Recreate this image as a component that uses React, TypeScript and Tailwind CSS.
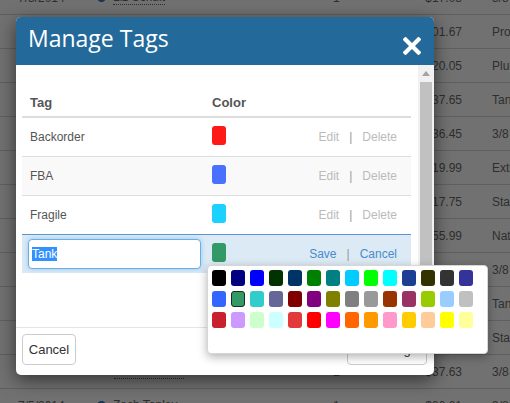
import React from "react";

const palette: string[][] = [
  ["#000000", "#000080", "#0000ff", "#003300", "#003366", "#008000", "#008080", "#00ccff", "#00ff00", "#00ffff", "#1c3f94", "#333300", "#333333", "#333399"],
  ["#3366ff", "#339966", "#33cccc", "#666699", "#800000", "#800080", "#808000", "#808080", "#999999", "#993300", "#993366", "#99cc00", "#99ccff", "#c0c0c0"],
  ["#c9202e", "#cc99ff", "#ccffcc", "#ccffff", "#e23a3a", "#ff0000", "#ff00ff", "#ff6600", "#ff9900", "#ff99cc", "#ffcc00", "#ffcc99", "#ffff00", "#ffff99"],
];

type BgRow = { date?: string; name?: string; icon?: "person" | "box"; qty?: string; price?: string; desc?: string };

const bgRows: BgRow[] = [
  { date: "7/3/2014", name: "Liz Schult", icon: "person", qty: "1", price: "$17.08", desc: "3/8" },
  { date: "7/3/2014", name: "Liz Schult", icon: "person", qty: "1", price: "$101.67", desc: "Product" },
  { date: "7/3/2014", name: "Liz Schult", icon: "person", qty: "1", price: "$20.05", desc: "Plumbing" },
  { date: "7/3/2014", name: "Liz Schult", icon: "person", qty: "1", price: "$37.65", desc: "Tank" },
  { date: "7/3/2014", name: "Liz Schult", icon: "person", qty: "1", price: "$36.45", desc: "3/8" },
  { date: "7/3/2014", name: "Liz Schult", icon: "person", qty: "1", price: "$19.99", desc: "Extra" },
  { date: "7/3/2014", name: "Liz Schult", icon: "person", qty: "1", price: "$17.75", desc: "Standard" },
  { date: "7/3/2014", name: "Liz Schult", icon: "person", qty: "1", price: "$55.99", desc: "Natural" },
  { date: "7/3/2014", name: "Liz Schult", icon: "person", qty: "1", price: "$12.00", desc: "3/8" },
  { date: "7/3/2014", name: "Liz Schult", icon: "person", qty: "1", price: "$12.00", desc: "Tank" },
  { date: "7/3/2014", name: "Liz Schult", icon: "person", qty: "1", price: "$12.00", desc: "Standard" },
  { date: "", name: "Amazon.com", icon: "box", qty: "1", price: "$37.63", desc: "3/8" },
  { date: "7/5/2014", name: "Zach Tanley", icon: "person", qty: "1", price: "$30.01", desc: "3/8" },
];

function Background() {
  return (
    <div className="-mt-[19px] font-['Liberation_Sans',Arial,sans-serif] text-[12px] text-[#2e2e2e]">
      {bgRows.map((r, i) => (
        <div key={i} className="flex h-[34px] items-center border-b border-[#5f5f5f]">
          <div className="w-[97px] shrink-0 pl-[18px]">{r.date}</div>
          <div className="flex w-[226px] shrink-0 items-center gap-[7px]">
            {r.icon === "person" ? (
              <span className="h-[9px] w-[9px] rounded-full border-[2px] border-[#1d3550] bg-[#3a5878]" />
            ) : (
              <span className="h-[7px] w-[10px] border border-[#222] bg-[#6a6a6a]" />
            )}
            <span className="border-b border-dotted border-[#2e2e2e] leading-[14px]">{r.name}</span>
          </div>
          <div className="w-[40px] shrink-0 pl-[10px]">{r.qty}</div>
          <div className="w-[99px] shrink-0 text-right">{r.price}</div>
          <div className="shrink-0 whitespace-nowrap pl-[30px]">{r.desc}</div>
        </div>
      ))}
    </div>
  );
}

function TagRow({ name, color, striped }: { name: string; color: string; striped?: boolean }) {
  return (
    <div className={`flex h-[39px] items-center border-b border-[#dddddd] ${striped ? "bg-[#f9f9f9]" : "bg-white"}`}>
      <div className="w-[182px] pl-[8px] text-[12px] text-[#555555]">{name}</div>
      <div className="flex-1 pl-[8px]">
        <div className="-mt-[3px] h-[19px] w-[14px] rounded-[3px]" style={{ backgroundColor: color }} />
      </div>
      <div className="flex items-center pr-[14px] text-[12px] text-[#bbbbbb]">
        <span>Edit</span>
        <span className="mx-[10px] text-[#999999]">|</span>
        <span>Delete</span>
      </div>
    </div>
  );
}

function Popover() {
  return (
    <div className="absolute left-[-5px] top-[22px] z-20 h-[89px] w-[281px] rounded-[4px] border border-[#d6d6d6] bg-white pl-[4px] pt-[4px] shadow-[0_3px_10px_rgba(0,0,0,0.3)]">
      <div className="grid grid-cols-[repeat(14,14px)] gap-x-[5px] gap-y-[5px]">
        {palette.flat().map((c, i) => (
          <div
            key={i}
            className={`h-[16px] w-[14px] rounded-[3px] ${c === "#339966" ? "border border-[#1c2a22]" : ""}`}
            style={{ backgroundColor: c }}
          />
        ))}
      </div>
    </div>
  );
}

export default function App() {
  return (
    <div className="relative h-[403px] w-[510px] overflow-hidden bg-[#717171] font-['Liberation_Sans',Arial,sans-serif]">
      <Background />

      <div className="absolute left-[16px] top-[17px] z-10 flex h-[358px] w-[418px] flex-col rounded-[5px] bg-white shadow-[0_5px_18px_rgba(0,0,0,0.55)]">
        {/* header */}
        <div className="flex h-[48px] items-start justify-between rounded-t-[5px] bg-[#236a9a] pl-[12px] pr-[13px]">
          <div className="pt-[7px] font-['Open_Sans',sans-serif] text-[23px] leading-[28px] text-white">Manage Tags</div>
          <svg className="mt-[20px]" width="18" height="18" viewBox="0 0 18 18">
            <path d="M2.5 2.5 L15.5 15.5 M15.5 2.5 L2.5 15.5" stroke="#ffffff" strokeWidth="4.2" strokeLinecap="square" />
          </svg>
        </div>

        {/* body */}
        <div className="flex h-[262px]">
          <div className="flex-1 pl-[6px] pr-[7px] pt-[18px]">
            <div className="flex h-[35px] items-start border-b-2 border-[#dddddd] pt-[10px] text-[13px] font-bold text-[#555555]">
              <div className="w-[182px] pl-[8px]">Tag</div>
              <div className="pl-[8px]">Color</div>
            </div>
            <TagRow name="Backorder" color="#ff1a1a" />
            <TagRow name="FBA" color="#4a70ff" striped />
            <div className="flex h-[38px] items-center bg-white">
              <div className="w-[182px] pl-[8px] text-[12px] text-[#555555]">Fragile</div>
              <div className="flex-1 pl-[8px]">
                <div className="-mt-[3px] h-[19px] w-[14px] rounded-[3px] bg-[#1ad1ff]" />
              </div>
              <div className="flex items-center pr-[14px] text-[12px] text-[#bbbbbb]">
                <span>Edit</span>
                <span className="mx-[10px] text-[#999999]">|</span>
                <span>Delete</span>
              </div>
            </div>
            <div className="flex h-[39px] items-center border-t border-[#5b95d6] bg-[#dceaf5]">
              <div className="w-[182px] pl-[6px]">
                <div className="flex h-[30px] w-[173px] items-center rounded-[4px] border border-[#66afe9] bg-white pl-[3px] shadow-[0_0_5px_rgba(102,175,233,0.6)]">
                  <span className="bg-[#3390ff] text-[12px] leading-[14px] text-white">Tank</span>
                </div>
              </div>
              <div className="flex-1 pl-[8px]">
                <div className="relative -mt-[3px] h-[19px] w-[14px]">
                  <div className="h-[19px] w-[14px] rounded-[3px] bg-[#339966]" />
                  <Popover />
                </div>
              </div>
              <div className="flex items-center pr-[14px] text-[12px] text-[#4a8bcb]">
                <span>Save</span>
                <span className="mx-[10px] text-[#999999]">|</span>
                <span>Cancel</span>
              </div>
            </div>
          </div>
          {/* scrollbar */}
          <div className="flex w-[16px] flex-col bg-[#f1f1f1]">
            <div className="flex h-[17px] items-center justify-center">
              <svg width="8" height="5" viewBox="0 0 8 5">
                <path d="M0 5 L4 0 L8 5 Z" fill="#a3a3a3" />
              </svg>
            </div>
            <div className="ml-[2px] mr-[2px] flex-1 bg-[#c1c1c1]" />
            <div className="flex h-[17px] items-center justify-center">
              <svg width="8" height="5" viewBox="0 0 8 5">
                <path d="M0 0 L4 5 L8 0 Z" fill="#a3a3a3" />
              </svg>
            </div>
          </div>
        </div>

        {/* footer */}
        <div className="flex flex-1 items-start justify-between border-t border-[#e5e5e5] pl-[6px] pr-[7px] pt-[6px]">
          <div className="flex h-[31px] w-[54px] items-center justify-center rounded-[4px] border border-[#cccccc] bg-white text-[13px] text-[#333333]">
            Cancel
          </div>
          <div className="flex h-[31px] w-[80px] items-center justify-center rounded-[4px] border border-[#cccccc] bg-white text-[13px] text-[#333333]">
            Save Tags
          </div>
        </div>
      </div>
    </div>
  );
}
